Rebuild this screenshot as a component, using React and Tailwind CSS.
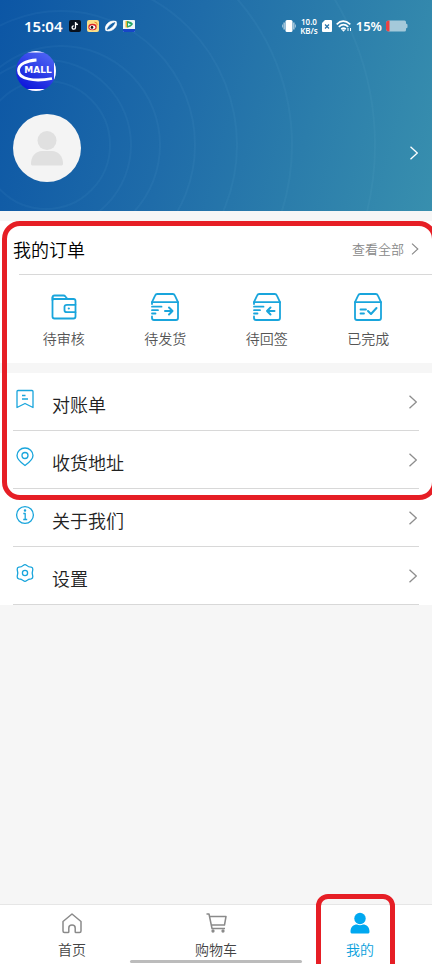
const BoxIcon = ({ type }) => (
  <svg
    className="w-7 h-7"
    viewBox="0 0 28 28"
    fill="none"
    stroke="#19a5dc"
    strokeWidth="1.800"
    strokeLinecap="round"
    strokeLinejoin="round"
  >
    <path d="M1 9.2 4.2 2.4Q4.8 1 6.2 1h15.6q1.4 0 2 1.4L27 9.2" />
    {type === "done" ? (
      <>
        <path d="M1 9.2h26V25q0 2-2 2H3q-2 0-2-2Z" />
        <path d="M6.5 16.5H12M6.5 20.5h3.5" />
        <path d="m14 18 3 3 5.5-6" strokeWidth="2" />
      </>
    ) : (
      <>
        <path d="M1 11V9.2h26V25q0 2-2 2H3q-2 0-2-2v-1.5" />
        <path d="M1 13.7h9.5M1 17.2h6M1 20.5h3.5" />
        {type === "send" ? (
          <path d="M14 18h7.5M18 14.5l3.5 3.5-3.5 3.5" strokeWidth="2" />
        ) : (
          <path d="M21.5 18H14M17.5 14.5 14 18l3.5 3.5" strokeWidth="2" />
        )}
      </>
    )}
  </svg>
);

const WalletIcon = () => (
  <svg
    className="w-7 h-7"
    viewBox="0 0 28 28"
    fill="none"
    stroke="#19a5dc"
    strokeWidth="1.800"
    strokeLinecap="round"
    strokeLinejoin="round"
  >
    <path d="M2.500 7V4.500q0-2 2-2h9q1.200 0 1.900 1L17.500 6" />
    <path d="M25.500 11.500V8q0-2-2-2H4.500q-2 0-2-1.500V23.500q0 2 2 2h19q2 0 2-2v-4" />
    <path d="M25.500 11.800H17q-2.500 0-2.500 2v3.400q0 2 2.500 2h8.500Z" />
    <circle cx="18.800" cy="15.500" r="0.500" fill="#19a5dc" strokeWidth="1.200" />
  </svg>
);

const Chevron = ({ className }) => (
  <svg
    className={className}
    viewBox="0 0 8 14"
    fill="none"
    stroke="currentColor"
    strokeWidth="1.300"
  >
    <path d="M0.500 0.700 7.300 7 0.500 13.300" />
  </svg>
);

const rowIcons = {
  bill: (
    <>
      <path d="M2 1.500h14q1 0 1 1V18.500l-8-4-8 4V2.500q0-1 1-1Z" />
      <path d="M6 6.500h3.500M6 10h6" />
    </>
  ),
  address: (
    <>
      <path d="M9 18.500C5.500 16 1 12.500 1 8.500a8 7.500 0 0 1 16 0c0 4-4.500 7.500-8 10Z" />
      <circle cx="9" cy="8.500" r="3" />
    </>
  ),
  about: (
    <>
      <circle cx="9" cy="10" r="8.400" />
      <path d="M7.300 8.500H9.200V14.500M7.200 14.500h4" />
      <circle cx="9" cy="5.500" r="0.600" fill="#19a5dc" />
    </>
  ),
  settings: (
    <>
      <path d="M7.300 2.400Q9 1 10.700 2.400 12.400 4.200 15.200 4.200 17 4.600 16.800 6.500 15.600 10 16.800 13.500 17 15.400 15.200 15.800 12.400 15.800 10.700 17.600 9 19 7.300 17.600 5.600 15.800 2.800 15.800 1 15.400 1.200 13.500 2.400 10 1.200 6.500 1 4.600 2.800 4.200 5.600 4.200 7.300 2.400Z" />
      <circle cx="9" cy="10" r="2.600" />
    </>
  ),
};

const MenuRow = ({ icon, label }) => (
  <li className="border-b border-[#d8d8d8]">
    <a href="#" className="flex items-center h-[57px] pl-[3px] pr-[2px]">
      <svg
        className="w-[18px] h-5 mb-1.5 mr-[18px] overflow-visible"
        viewBox="0 0 18 20"
        fill="none"
        stroke="#19a5dc"
        strokeWidth="1.300"
        strokeLinejoin="round"
      >
        {rowIcons[icon]}
      </svg>
      <span className="flex-1 pt-1 text-lg leading-6">{label}</span>
      <Chevron className="w-2 h-3.5 text-[#8e8e8e]" />
    </a>
  </li>
);

const StatusBar = () => (
  <div className="flex items-center justify-between h-5 pl-6 pr-6">
    <div className="flex items-center gap-1.5">
      <span className="mr-px font-['Noto_Sans',sans-serif] text-[15px] leading-5 font-semibold">
        15:04
      </span>
      <svg className="w-3 h-3" viewBox="0 0 12 12">
        <rect width="12" height="12" rx="2" fill="#08101c" />
        <path
          d="M6.500 2v5.500a1.700 1.700 0 1 1-1.700-1.700M6.500 2.500q.5 2 2.500 2"
          fill="none"
          stroke="#fff"
          strokeWidth="1.300"
        />
      </svg>
      <svg className="w-3 h-3" viewBox="0 0 12 12">
        <rect width="12" height="12" rx="2" fill="#fbdf87" />
        <ellipse cx="5.500" cy="7" rx="4.200" ry="3.300" fill="#d8232a" />
        <ellipse cx="5.400" cy="7.300" rx="2.900" ry="2.100" fill="#fff" />
        <circle cx="5" cy="7.400" r="1.300" fill="#16110d" />
        <path d="M7.500 2.200q3-.3 2.700 3" fill="none" stroke="#ef8a22" />
      </svg>
      <svg className="w-3 h-3 overflow-visible" viewBox="0 0 12 12">
        <path
          d="M1 10.500C-1.500 5.500 5-.5 11 1.500 6 2.500 2.500 6 1 10.500ZM11 1.500C13.500 6.500 7 12.500 1 10.500 6 9.500 9.500 6 11 1.500Z"
          fill="#fff"
          stroke="#fff"
          strokeWidth="0.800"
        />
      </svg>
      <svg className="w-3 h-3" viewBox="0 0 12 12">
        <rect width="12" height="12" rx="1" fill="#eef6f8" />
        <path d="M2.500 1h3v6.500h-3Z" fill="#f1b32f" />
        <path d="M4 1q5 .5 6 3-1.500 3-6 3.500Z" fill="#29a566" />
        <path d="M5 3l3 1.500L5 6Z" fill="#dff" />
        <path d="M0 9h12v2q0 1-1 1H1q-1 0-1-1Z" fill="#1646c8" />
      </svg>
    </div>
    <div className="flex items-center gap-1 font-['Noto_Sans',sans-serif]">
      <svg className="w-3.5 h-3" viewBox="0 0 14 12" fill="#fff">
        <rect x="3.500" width="7" height="12" rx="1.500" />
        <path d="M1.500 2.500h1.300v7H1.500ZM11.200 2.500h1.300v7h-1.300Z" opacity="0.700" />
        <path d="M0 4.500h1v3H0ZM13 4.500h1v3h-1Z" opacity="0.500" />
      </svg>
      <span className="flex flex-col items-center text-[8px] leading-[9px] font-semibold">
        <span>10.0</span>
        <span>KB/s</span>
      </span>
      <svg className="w-2.5 h-3" viewBox="0 0 10 12">
        <path d="M3 0h6q1 0 1 1v10q0 1-1 1H1q-1 0-1-1V3Z" fill="#fff" />
        <path d="m3 4.500 4 4M7 4.500l-4 4" stroke="#2672a9" strokeWidth="1.200" />
      </svg>
      <svg
        className="w-4 h-3"
        viewBox="0 0 16 12"
        fill="none"
        stroke="#fff"
        strokeWidth="1.700"
      >
        <path d="M.7 4.300q6.300-6.300 13.600 0M2.800 6.800q4.700-4.300 9.400 0M5.200 9.200q2.300-2 4.600 0" />
        <path d="m5.500 9.500 2 2.300 2-2.300Z" fill="#fff" stroke="none" />
        <path d="M12 8v3M14.500 8v3" strokeWidth="1" />
      </svg>
      <span className="text-[13px] leading-5 font-semibold">15%</span>
      <svg className="w-[22px] h-3" viewBox="0 0 22 12">
        <path
          d="M3 .5h15.500q1.500 0 1.500 1.500v1.500l1.500 1v3L20 8.500V10q0 1.500-1.500 1.500H3Q0 11.500 0 8.500v-5Q0 .5 3 .5Z"
          fill="#a4c9da"
        />
        <path d="M3.500.5v11H3q-3 0-3-3v-5q0-3 3-3Z" fill="#e94343" />
      </svg>
    </div>
  </div>
);

const MallLogo = () => (
  <svg className="w-10 h-10" viewBox="0 0 40 40">
    <defs>
      <linearGradient id="logoFill" x1="0.800" y1="0" x2="0.200" y2="1">
        <stop offset="0" stopColor="#5068f5" />
        <stop offset="1" stopColor="#0a12d8" />
      </linearGradient>
      <clipPath id="logoClip">
        <circle cx="20" cy="20" r="20" />
      </clipPath>
    </defs>
    <g clipPath="url(#logoClip)">
      <rect width="40" height="40" fill="url(#logoFill)" />
      <path d="M0 0h40v1.500H0ZM0 38h40v2H0ZM38 10H40v20h-2Z" fill="#fff" />
      <path
        d="M20.500 9C11 9.500 2.500 13 2.500 19.500 2.500 28 18 31 36 27.500"
        fill="none"
        stroke="#fff"
        strokeWidth="2.800"
      />
    </g>
    <text
      x="22"
      y="22"
      textAnchor="middle"
      className="font-['DejaVu_Sans',sans-serif] text-[9px] font-bold"
      fill="#fff"
    >
      MALL
    </text>
  </svg>
);

const Header = () => (
  <header className="relative h-[211px] overflow-hidden text-white bg-linear-[105deg,#0c56a5_0%,#1f6ca9_42%,#2b7dab_70%,#388fae_100%]">
    <svg
      className="absolute inset-0 w-full h-full"
      viewBox="0 0 432 211"
      preserveAspectRatio="xMinYMin slice"
      fill="none"
      stroke="#8fd0f0"
      strokeOpacity="0.060"
      strokeWidth="2"
    >
      <circle cx="46" cy="145" r="64" />
      <circle cx="46" cy="145" r="85" />
      <circle cx="61" cy="145" r="99" />
      <circle cx="61" cy="145" r="134" />
      <circle cx="70" cy="145" r="167" />
      <circle cx="70" cy="145" r="222" />
      <circle cx="92" cy="145" r="283" />
    </svg>
    <div className="relative pt-4">
      <StatusBar />
      <div className="pt-[15px] pl-4">
        <MallLogo />
      </div>
      <a href="#" className="flex items-center justify-between mt-[23px] pl-[13px] pr-[14px]">
        <svg className="w-[68px] h-[68px]" viewBox="0 0 68 68">
          <circle cx="34" cy="34" r="34" fill="#f4f4f4" />
          <circle cx="34" cy="26.500" r="9.500" fill="#e0e0e0" />
          <path
            d="M18 49.500C18 42 23 37 29 37h10c6 0 11 5 11 12.500 0 1.500-.5 2-2 2H20c-1.500 0-2-.5-2-2Z"
            fill="#e0e0e0"
          />
        </svg>
        <Chevron className="w-2 h-3.5 mt-[10px]" />
      </a>
    </div>
  </header>
);

const orders = [
  { label: "待审核", icon: <WalletIcon /> },
  { label: "待发货", icon: <BoxIcon type="send" /> },
  { label: "待回签", icon: <BoxIcon type="back" /> },
  { label: "已完成", icon: <BoxIcon type="done" /> },
];

const TabBar = () => (
  <nav className="relative mt-auto h-[60px] grid grid-cols-3 bg-white border-t border-[#e6e6e6] text-sm leading-5 text-[#444]">
    <a href="#" className="flex flex-col items-center gap-[3px] pt-[7px]">
      <svg
        className="w-6 h-6"
        viewBox="0 0 24 24"
        fill="none"
        stroke="#8a8a8a"
        strokeWidth="1.500"
        strokeLinejoin="round"
      >
        <path d="M3 9.500 12 2l9 7.500V19q0 1.500-1.500 1.500H16q-.8 0-.8-.8V16q0-3-3.200-3t-3.200 3v3.700q0 .8-.8.8H4.500Q3 20.500 3 19Z" />
      </svg>
      首页
    </a>
    <a href="#" className="flex flex-col items-center gap-[3px] pt-[7px]">
      <svg
        className="w-6 h-6"
        viewBox="0 0 24 24"
        fill="none"
        stroke="#8a8a8a"
        strokeWidth="1.500"
        strokeLinejoin="round"
      >
        <path d="M2.500 2H5l3 14.500h13M6 4.500H22L20.500 13H7.500" />
        <circle cx="9" cy="19" r="0.900" fill="#8a8a8a" />
        <circle cx="19" cy="19" r="0.900" fill="#8a8a8a" />
      </svg>
      购物车
    </a>
    <a
      href="#"
      className="relative flex flex-col items-center gap-[3px] pt-[7px] text-[#0a9fdc]"
    >
      <svg className="w-6 h-6" viewBox="0 0 24 24" fill="#00a8f0">
        <circle cx="12" cy="6.500" r="5.700" />
        <path d="M2.500 19.500c0-4.500 3-7 6.500-7 2 1 4 1 6 0 3.500 0 6.500 2.500 6.500 7 0 1.500-.5 2-2 2h-15c-1.500 0-2-.5-2-2Z" />
      </svg>
      我的
      <span className="absolute -top-[11px] -bottom-5 left-1/2 w-[79px] -ml-[44px] border-5 border-[#e61e25] rounded-xl" />
    </a>
    <span className="absolute bottom-px left-[30%] right-[30%] h-[3px] bg-[#bcbcbc] rounded-full" />
  </nav>
);

const App = () => {
  return (
    <main className="relative min-h-screen flex flex-col overflow-hidden bg-[#f6f6f6] text-[#222] font-[350] font-['Noto_Sans_CJK_SC',sans-serif]">
      <Header />

      <div className="relative mt-[10px]">
        <section className="h-[142px] bg-white">
          <div className="flex items-center justify-between h-[53px] pt-0.5 pl-[13px] pr-[13px]">
            <h2 className="text-lg leading-6 font-[350] text-black">我的订单</h2>
            <a
              href="#"
              className="flex items-center gap-[7px] text-[13px] leading-5 text-[#888]"
            >
              查看全部
              <Chevron className="w-2 h-3" />
            </a>
          </div>
          <div className="ml-[19px] border-t border-[#d8d8d8]" />
          <div className="grid grid-cols-4 px-[13px] pt-[18px]">
            {orders.map((order) => (
              <a
                key={order.label}
                href="#"
                className="flex flex-col items-center gap-[7px] text-sm leading-5 text-[#555]"
              >
                {order.icon}
                {order.label}
              </a>
            ))}
          </div>
        </section>

        <ul className="mt-[10px] px-[13px] bg-white">
          <MenuRow icon="bill" label="对账单" />
          <MenuRow icon="address" label="收货地址" />
        </ul>

        <span className="absolute top-0 -bottom-[11px] left-[2px] -right-[5px] z-10 border-5 border-[#e61e25] rounded-[18px] pointer-events-none" />
      </div>

      <ul className="px-[13px] bg-white">
        <MenuRow icon="about" label="关于我们" />
        <MenuRow icon="settings" label="设置" />
      </ul>

      <TabBar />
    </main>
  );
};

export default App;
